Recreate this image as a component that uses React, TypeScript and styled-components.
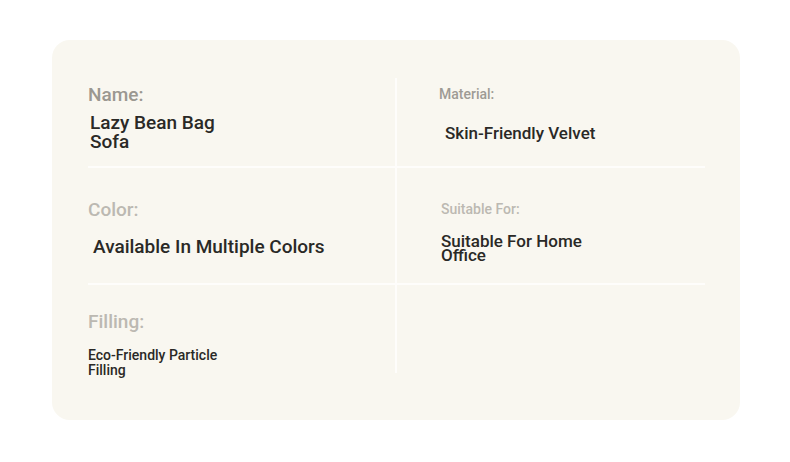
import React from "react";
import styled, { createGlobalStyle } from "styled-components";

const Global = createGlobalStyle`
  html, body { margin: 0; padding: 0; background: #ffffff; }
  body { font-family: Roboto, "Noto Sans", Arial, sans-serif; }
`;

const Page = styled.div`
  padding: 40px 50px 42px 52px;
  width: 790px;
  box-sizing: border-box;
`;

const Card = styled.div`
  width: 688px;
  height: 380px;
  box-sizing: border-box;
  background: #f9f7f0;
  border-radius: 18px;
  padding: 38px 35px 0 36px;
`;

const Grid = styled.div`
  display: grid;
  grid-template-columns: 309px 308px;
  grid-template-rows: 90px 117px 88px;
`;

const Cell = styled.div<{ $pt: number; $pl: number; $gap: number; $right?: boolean; $bottom?: boolean }>`
  display: flex;
  flex-direction: column;
  align-items: flex-start;
  box-sizing: border-box;
  padding-top: ${(p) => p.$pt}px;
  padding-left: ${(p) => p.$pl}px;
  gap: ${(p) => p.$gap}px;
  border-right: ${(p) => (p.$right ? "2px solid #fefdfb" : "none")};
  border-bottom: ${(p) => (p.$bottom ? "2px solid #fefdfb" : "none")};
`;

const Label = styled.div<{ $size: number; $lh: number; $color: string }>`
  font-size: ${(p) => p.$size}px;
  line-height: ${(p) => p.$lh}px;
  font-weight: 500;
  color: ${(p) => p.$color};
`;

const Value = styled.div<{ $size: number; $lh: number; $indent: number; $max: number }>`
  font-size: ${(p) => p.$size}px;
  line-height: ${(p) => p.$lh}px;
  font-weight: 500;
  color: #2a2926;
  margin-left: ${(p) => p.$indent}px;
  max-width: ${(p) => p.$max}px;
`;

type Item = {
  label?: string;
  value?: string;
  pt: number;
  pl: number;
  gap: number;
  ls: number;
  llh: number;
  lc: string;
  vs: number;
  vlh: number;
  vi: number;
  vmax: number;
  right?: boolean;
  bottom?: boolean;
};

const items: Item[] = [
  { label: "Name:", value: "Lazy Bean Bag Sofa", pt: 6, pl: 0, gap: 7, ls: 19, llh: 22, lc: "#9b9891", vs: 19, vlh: 19, vi: 2, vmax: 150, right: true, bottom: true },
  { label: "Material:", value: "Skin-Friendly Velvet", pt: 7, pl: 42, gap: 20, ls: 14, llh: 18, lc: "#9e9b95", vs: 17, vlh: 20, vi: 6, vmax: 250, bottom: true },
  { label: "Color:", value: "Available In Multiple Colors", pt: 31, pl: 0, gap: 15, ls: 19, llh: 22, lc: "#bcb9b2", vs: 19, vlh: 22, vi: 5, vmax: 290, right: true, bottom: true },
  { label: "Suitable For:", value: "Suitable For Home Office", pt: 32, pl: 44, gap: 16, ls: 14, llh: 18, lc: "#bcb9b2", vs: 17, vlh: 14, vi: 0, vmax: 160, bottom: true },
  { label: "Filling:", value: "Eco-Friendly Particle Filling", pt: 25, pl: 0, gap: 14, ls: 19, llh: 24, lc: "#bcb9b2", vs: 14, vlh: 15, vi: 0, vmax: 150, right: true },
  { pt: 0, pl: 0, gap: 0, ls: 14, llh: 18, lc: "#bcb9b2", vs: 14, vlh: 15, vi: 0, vmax: 150 },
];

export default function App() {
  return (
    <>
      <Global />
      <Page>
        <Card>
          <Grid>
            {items.map((it, i) => (
              <Cell key={i} $pt={it.pt} $pl={it.pl} $gap={it.gap} $right={it.right} $bottom={it.bottom}>
                {it.label && (
                  <Label $size={it.ls} $lh={it.llh} $color={it.lc}>
                    {it.label}
                  </Label>
                )}
                {it.value && (
                  <Value $size={it.vs} $lh={it.vlh} $indent={it.vi} $max={it.vmax}>
                    {it.value}
                  </Value>
                )}
              </Cell>
            ))}
          </Grid>
        </Card>
      </Page>
    </>
  );
}
